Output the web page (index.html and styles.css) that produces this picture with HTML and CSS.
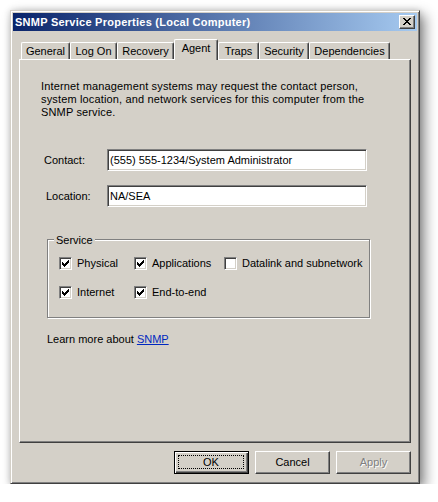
FILE: index.html
```html
<!DOCTYPE html>
<html>
<head>
<meta charset="utf-8">
<link rel="stylesheet" href="styles.css">
</head>
<body>
<div class="window">
  <div class="titlebar">
    <span class="title">SNMP Service Properties (Local Computer)</span>
    <span class="close"><svg width="8" height="7" viewBox="0 0 8 7" shape-rendering="crispEdges"><path d="M0 0h2v1h-2zM6 0h2v1h-2zM1 1h2v1h-2zM5 1h2v1h-2zM2 2h4v1h-4zM3 3h2v1h-2zM2 4h4v1h-4zM1 5h2v1h-2zM5 5h2v1h-2zM0 6h2v1h-2zM6 6h2v1h-2z" fill="#000"/></svg></span>
  </div>
  <div class="client">
    <div class="tabstrip">
      <div class="tab t-general">General</div>
      <div class="tab t-logon">Log On</div>
      <div class="tab t-recovery">Recovery</div>
      <div class="tab t-agent selected">Agent</div>
      <div class="tab t-traps">Traps</div>
      <div class="tab t-security">Security</div>
      <div class="tab t-deps">Dependencies</div>
    </div>
    <div class="panel">
      <p class="desc">Internet management systems may request the contact person,<br>system location, and network services for this computer from the<br>SNMP service.</p>
      <div class="field first">
        <span class="label l-contact">Contact:</span>
        <span class="input">(555) 555-1234/System Administrator</span>
      </div>
      <div class="field">
        <span class="label l-location">Location:</span>
        <span class="input">NA/SEA</span>
      </div>
      <div class="group">
        <span class="legend">Service</span>
        <div class="checks">
          <div class="check"><span class="box on"><svg width="7" height="7" viewBox="0 0 7 7" shape-rendering="crispEdges"><path d="M6 0h1v3h-1zM5 1h1v3h-1zM4 2h1v3h-1zM3 3h1v3h-1zM2 4h1v3h-1zM1 3h1v3h-1zM0 2h1v3h-1z" fill="#000"/></svg></span>Physical</div>
          <div class="check"><span class="box on"><svg width="7" height="7" viewBox="0 0 7 7" shape-rendering="crispEdges"><path d="M6 0h1v3h-1zM5 1h1v3h-1zM4 2h1v3h-1zM3 3h1v3h-1zM2 4h1v3h-1zM1 3h1v3h-1zM0 2h1v3h-1z" fill="#000"/></svg></span>Applications</div>
          <div class="check"><span class="box"></span>Datalink and subnetwork</div>
          <div class="check"><span class="box on"><svg width="7" height="7" viewBox="0 0 7 7" shape-rendering="crispEdges"><path d="M6 0h1v3h-1zM5 1h1v3h-1zM4 2h1v3h-1zM3 3h1v3h-1zM2 4h1v3h-1zM1 3h1v3h-1zM0 2h1v3h-1z" fill="#000"/></svg></span>Internet</div>
          <div class="check"><span class="box on"><svg width="7" height="7" viewBox="0 0 7 7" shape-rendering="crispEdges"><path d="M6 0h1v3h-1zM5 1h1v3h-1zM4 2h1v3h-1zM3 3h1v3h-1zM2 4h1v3h-1zM1 3h1v3h-1zM0 2h1v3h-1z" fill="#000"/></svg></span>End-to-end</div>
        </div>
      </div>
      <p class="learn">Learn more about <a class="link" href="#">SNMP</a></p>
    </div>
    <div class="buttons">
      <div class="btn default"><span class="focus">OK</span></div>
      <div class="btn">Cancel</div>
      <div class="btn disabled">Apply</div>
    </div>
  </div>
</div>
</body>
</html>
```
FILE: styles.css
```css
* { box-sizing: border-box; }
html, body { margin: 0; padding: 0; background: #fff; }
body {
  font-family: "Liberation Sans", Arial, sans-serif;
  font-size: 11px;
  line-height: 13px;
  color: #000;
}
.window {
  margin: 10px 0 0 10px;
  width: 410px;
  height: 474px;
  background: #d4d0c8;
  border: 1px solid;
  border-color: #d4d0c8 #404040 #404040 #d4d0c8;
  padding: 2px;
  box-shadow: inset 1px 1px #fff, inset -1px -1px #808080, 5px 5px 12px rgba(0,0,0,0.45), 0 0 6px rgba(0,0,0,0.15);
  display: flex;
  flex-direction: column;
}
.titlebar {
  height: 18px;
  background: linear-gradient(to right, #0a246a, #a6caf0);
  display: flex;
  align-items: center;
  justify-content: space-between;
  padding: 0 2px 0 2px;
}
.title {
  color: #fff;
  font-weight: bold;
  font-size: 11px;
  letter-spacing: 0.25px;
}
.close {
  width: 16px;
  height: 14px;
  background: #d4d0c8;
  border: 1px solid;
  border-color: #fff #404040 #404040 #fff;
  box-shadow: inset -1px -1px #808080;
  display: flex;
  align-items: center;
  justify-content: center;
  padding: 0 1px 1px 0;
}
.close svg { display: block; }
.client {
  padding: 8px 6px 0 6px;
  display: flex;
  flex-direction: column;
}
.tabstrip {
  height: 20px;
  display: flex;
  align-items: flex-end;
  padding-left: 2px;
  position: relative;
  z-index: 1;
}
.tab {
  height: 17px;
  border-top: 1px solid #fff;
  border-left: 1px solid #fff;
  border-right: 1px solid #404040;
  box-shadow: inset -1px 0 #808080;
  border-top-left-radius: 2px;
  border-top-right-radius: 2px;
  text-align: center;
  padding-top: 2px;
  background: #d4d0c8;
}
.tab.selected {
  height: 21px;
  margin-bottom: -1px;
  padding-top: 2px;
}
.t-general { width: 49px; }
.t-logon { width: 47px; }
.t-recovery { width: 57px; }
.t-agent { width: 44px; }
.t-traps { width: 41px; }
.t-security { width: 50px; }
.t-deps { width: 81px; }
.panel {
  width: 392px;
  height: 384px;
  border: 1px solid;
  border-color: #fff #404040 #404040 #fff;
  box-shadow: inset -1px -1px #808080;
  padding: 20px 0 0 21px;
}
.desc { margin: 0; letter-spacing: 0.15px; }
.field {
  display: flex;
  align-items: center;
  height: 22px;
  margin-top: 14px;
}
.field.first { margin-top: 30px; }
.label { width: 66px; }
.l-contact { padding-left: 3px; }
.l-location { padding-left: 5px; }
.input {
  width: 260px;
  height: 22px;
  background: #fff;
  border: 1px solid;
  border-color: #808080 #fff #fff #808080;
  box-shadow: inset 1px 1px #404040, inset -1px -1px #d4d0c8;
  padding: 4px 0 0 2px;
  white-space: nowrap;
}
.group {
  position: relative;
  margin: 32px 0 0 6px;
  width: 323px;
  height: 79px;
  border: 1px solid #808080;
  box-shadow: inset 1px 1px #fff, 1px 1px #fff;
  padding: 17px 0 0 11px;
}
.legend {
  position: absolute;
  left: 6px;
  top: -6px;
  background: #d4d0c8;
  padding: 0 2px 0 2px;
}
.checks {
  display: grid;
  grid-template-columns: 75px 90px auto;
  row-gap: 16px;
}
.check {
  display: flex;
  align-items: center;
  height: 13px;
  white-space: nowrap;
}
.box {
  width: 13px;
  height: 13px;
  flex: none;
  background: #fff;
  border: 1px solid;
  border-color: #808080 #fff #fff #808080;
  box-shadow: inset 1px 1px #404040, inset -1px -1px #d4d0c8;
  margin-right: 5px;
  display: flex;
  align-items: center;
  justify-content: center;
}
.box svg { display: block; }
.learn {
  margin: 15px 0 0 6px;
}
.link {
  color: #0028c0;
  text-decoration: underline;
}
.buttons {
  display: flex;
  justify-content: flex-end;
  gap: 6px;
  margin-top: 8px;
}
.btn {
  width: 75px;
  height: 23px;
  background: #d4d0c8;
  border: 1px solid;
  border-color: #fff #404040 #404040 #fff;
  box-shadow: inset -1px -1px #808080;
  display: flex;
  align-items: center;
  justify-content: center;
  padding-bottom: 1px;
}
.btn.default {
  border: 1px solid #000;
  box-shadow: inset 1px 1px #fff, inset -1px -1px #404040, inset -2px -2px #808080;
  padding: 3px 4px 4px 3px;
}
.focus {
  width: 100%;
  height: 100%;
  border: 1px dotted #000;
  display: flex;
  align-items: center;
  justify-content: center;
}
.btn.disabled {
  color: #808080;
  text-shadow: 1px 1px #fff;
}
```
